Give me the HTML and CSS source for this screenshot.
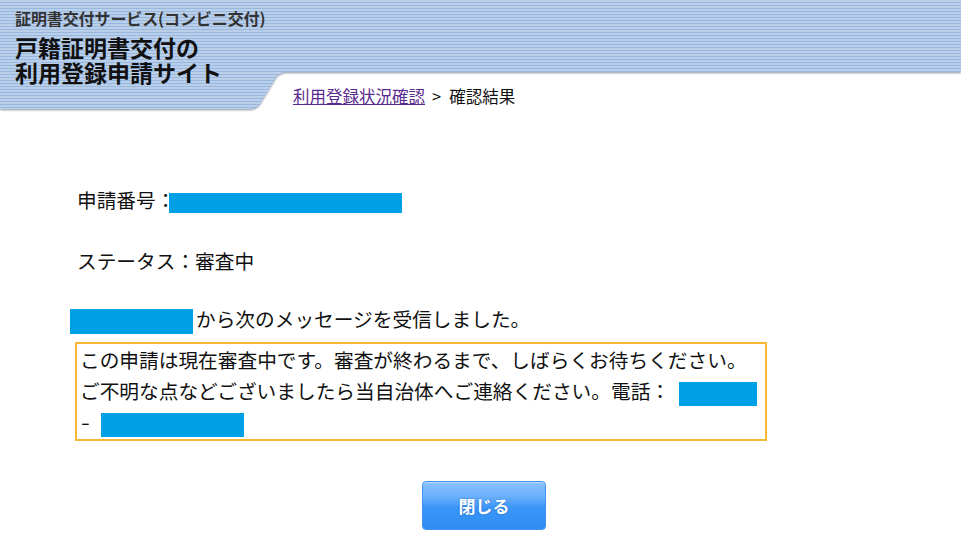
FILE: index.html
```html
<!DOCTYPE html>
<html lang="ja">
<head>
<meta charset="utf-8">
<title>確認結果</title>
<link rel="stylesheet" href="styles.css">
</head>
<body>
<header class="header">
  <div class="header-bg"><div class="header-shape"></div></div>
  <div class="titles">
    <div class="service">証明書交付サービス(コンビニ交付)</div>
    <h1 class="site-title">戸籍証明書交付の<br>利用登録申請サイト</h1>
  </div>
  <nav class="breadcrumb"><a href="#" class="crumb-link">利用登録状況確認</a><span class="sep">&gt;</span>確認結果</nav>
</header>
<main class="content">
  <p class="row row-number">申請番号：<span class="mask mask-number"></span></p>
  <p class="row row-status">ステータス：審査中</p>
  <p class="row-msg"><span class="mask mask-sender"></span>から次のメッセージを受信しました。</p>
  <div class="message">この申請は現在審査中です。審査が終わるまで、しばらくお待ちください。<br>ご不明な点などございましたら当自治体へご連絡ください。電話：<span class="mask mask-tel1"></span><br><span class="dash">-</span><span class="mask mask-tel2"></span></div>
  <div class="actions"><button class="btn-close" type="button">閉じる</button></div>
</main>
</body>
</html>
```
FILE: styles.css
```css
html, body {
  margin: 0;
  padding: 0;
  background: #fff;
}
body {
  font-family: "Noto Sans CJK JP", "Noto Sans", sans-serif;
  color: #111;
}
.header {
  display: grid;
  grid-template-columns: 278px 1fr;
  grid-template-rows: 72px 38px;
}
.header-bg {
  grid-area: 1 / 1 / 3 / 3;
  filter: drop-shadow(0 1px 1px rgba(40, 60, 90, 0.55));
}
.header-shape {
  height: 109px;
  background: repeating-linear-gradient(to bottom, #bccfe9 0px, #bccfe9 2px, #97b8e1 2px, #97b8e1 3px);
  clip-path: path('M0 0 H961 V72 H288 C281 72 278 74 275 79 L261 102 C258 107 255 109 248 109 H0 Z');
}
.titles {
  grid-area: 1 / 1 / 3 / 2;
  padding: 8px 0 0 15px;
  z-index: 1;
}
.service {
  font-size: 16px;
  font-weight: bold;
  color: #333;
  line-height: 21px;
  letter-spacing: -0.1px;
}
.site-title {
  margin: 6px 0 0;
  font-size: 23px;
  font-weight: bold;
  line-height: 25px;
  color: #111;
}
.breadcrumb {
  grid-area: 2 / 2 / 3 / 3;
  z-index: 1;
  padding: 13px 0 0 15px;
  font-size: 16.5px;
  line-height: 22px;
  color: #111;
}
.crumb-link {
  color: #5b2a8e;
  text-decoration: underline;
}
.sep {
  margin: 0 8px 0 7px;
}
.content {
  padding-left: 70px;
  font-size: 19.7px;
}
.row {
  margin: 0;
  padding-left: 7px;
  line-height: 32px;
}
.row-number {
  margin-top: 74px;
}
.row-status {
  margin-top: 29px;
}
.row-msg {
  margin: 26px 0 0;
  line-height: 32px;
}
.mask {
  display: inline-block;
  background: #00a0e6;
  vertical-align: middle;
}
.mask-number {
  width: 233px;
  height: 20px;
  margin-left: -6px;
}
.mask-sender {
  width: 123px;
  height: 25px;
  margin-right: 3px;
}
.mask-tel1 {
  width: 78px;
  height: 24px;
  margin-left: 9px;
}
.dash {
  display: inline-block;
  margin-left: 2px;
  transform: scaleX(1.3);
}
.mask-tel2 {
  width: 143px;
  height: 24px;
  margin-left: 12px;
}
.message {
  margin: 7px 0 0 5px;
  width: 685px;
  border: 2px solid #f7b838;
  padding: 0 0 2px 3px;
  line-height: 31px;
}
.actions {
  display: flex;
  justify-content: center;
  margin-top: 40px;
  padding-right: 63px;
}
.btn-close {
  width: 124px;
  height: 49px;
  border: 1px solid #3f93f2;
  border-radius: 4px;
  background: linear-gradient(to bottom, #8cc3ff 0%, #6cb0fb 30%, #3a96f7 55%, #2e8cf3 100%);
  color: #fff;
  font-family: "Noto Sans CJK JP", sans-serif;
  font-size: 17px;
  font-weight: bold;
  text-shadow: 0 0 2px rgba(0, 60, 150, 0.5);
  box-shadow: inset 0 1px 0 rgba(255, 255, 255, 0.4);
}
```
